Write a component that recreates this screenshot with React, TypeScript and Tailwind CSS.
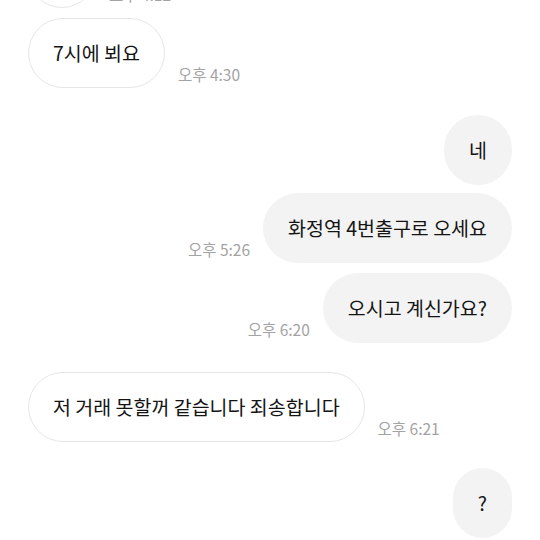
import React from "react";

const FONT = { fontFamily: '"Noto Sans CJK KR", "Noto Sans", sans-serif' };

function Time({ t, side }: { t: string; side: "left" | "right" }) {
  return (
    <span
      className={`mb-[4px] shrink-0 text-[15.5px] leading-[20px] text-[#a3a3a3] ${
        side === "left" ? "ml-[13px]" : "mr-[13px]"
      }`}
    >
      {t}
    </span>
  );
}

function In({ text, time, className }: { text: string; time?: string; className?: string }) {
  return (
    <div className={`flex items-end pl-[28px] ${className ?? ""}`}>
      <div className="flex h-[70px] items-center rounded-full border border-[#e6e6e6] bg-white px-[24px] text-[19.5px] text-[#141414] whitespace-nowrap">
        {text}
      </div>
      {time && <Time t={time} side="left" />}
    </div>
  );
}

function Out({ text, time, className }: { text: string; time?: string; className?: string }) {
  return (
    <div className={`flex items-end justify-end pr-[28px] ${className ?? ""}`}>
      {time && <Time t={time} side="right" />}
      <div className="flex h-[70px] items-center rounded-full bg-[#f3f3f3] px-[25px] text-[19.5px] text-[#141414] whitespace-nowrap">
        {text}
      </div>
    </div>
  );
}

export default function App() {
  return (
    <div className="h-[540px] w-[540px] overflow-hidden bg-white" style={FONT}>
      <div className="flex flex-col">
        <In text="네" time="오후 4:12" className="-mt-[62px]" />
        <In text="7시에 뵈요" time="오후 4:30" className="mt-[10px]" />
        <Out text="네" className="mt-[27px]" />
        <Out text="화정역 4번출구로 오세요" time="오후 5:26" className="mt-[8px]" />
        <Out text="오시고 계신가요?" time="오후 6:20" className="mt-[10px]" />
        <In text="저 거래 못할꺼 같습니다 죄송합니다" time="오후 6:21" className="mt-[29px]" />
        <Out text="?" className="mt-[26px]" />
      </div>
    </div>
  );
}
